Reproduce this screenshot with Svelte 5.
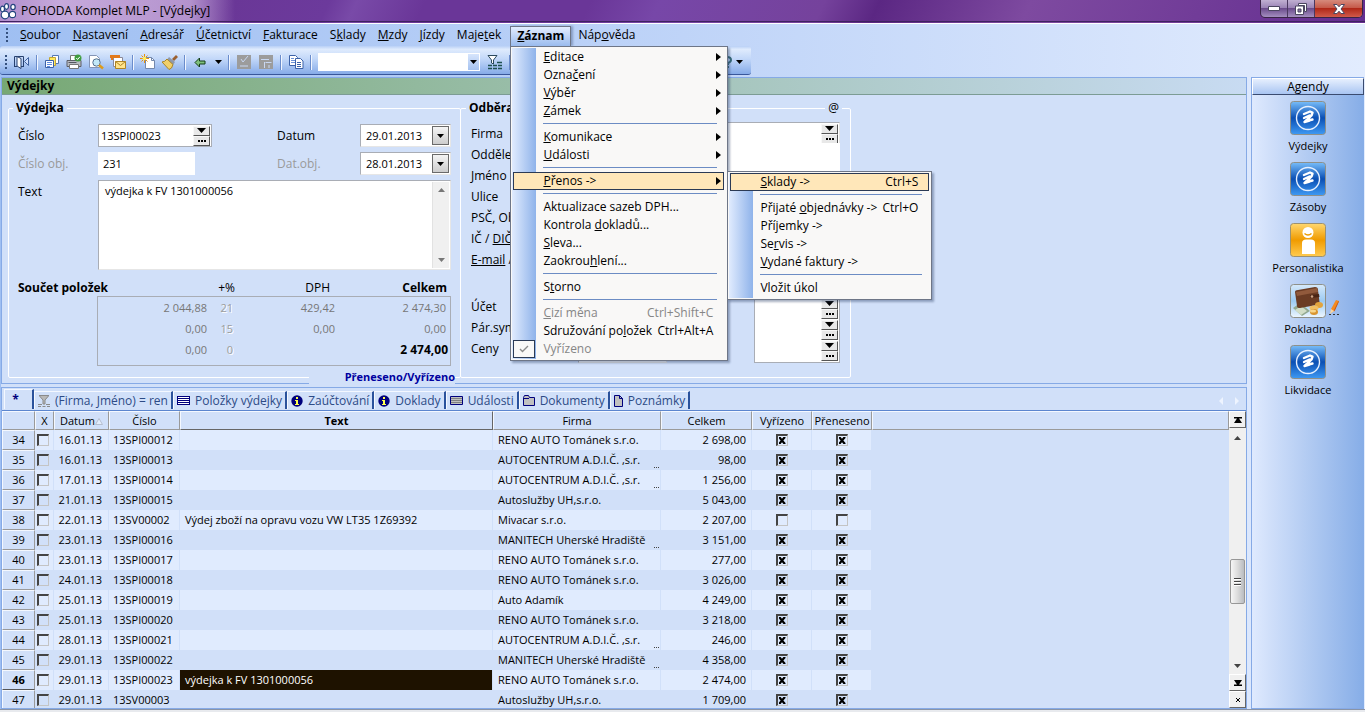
<script>
  const menus = [
    '&Soubor', '&Nastavení', '&Adresář', '&Účetnictví', '&Fakturace', 'S&klady',
    '&Mzdy', '&Jízdy', 'Maje&tek', '&Záznam', 'Náp&ověda'
  ];

  const recordMenu = [
    { text: '&Editace', sub: true },
    { text: 'Ozna&čení', sub: true },
    { text: '&Výběr', sub: true },
    { text: '&Zámek', sub: true },
    null,
    { text: '&Komunikace', sub: true },
    { text: '&Události', sub: true },
    null,
    { text: '&Přenos ->', sub: true, open: true },
    null,
    { text: 'Aktualizace sazeb DPH...' },
    { text: 'Kontrola &dokladů...' },
    { text: '&Sleva...' },
    { text: 'Zaokrou&hlení...' },
    null,
    { text: 'S&torno' },
    null,
    { text: '&Cizí měna', key: 'Ctrl+Shift+C', disabled: true },
    { text: 'Sdružování po&ložek', key: 'Ctrl+Alt+A' },
    { text: 'Vyřízeno', disabled: true, checked: true }
  ];

  const transferMenu = [
    { text: '&Sklady ->', key: 'Ctrl+S', open: true },
    null,
    { text: 'Přijaté &objednávky ->', key: 'Ctrl+O' },
    { text: 'Pří&jemky ->' },
    { text: 'Se&rvis ->' },
    { text: '&Vydané faktury ->' },
    null,
    { text: 'Vložit úkol' }
  ];

  const tabs = [
    { icon: 'funnel', text: '(Firma, Jméno) = ren' },
    { icon: 'list', text: 'Položky výdejky' },
    { icon: 'info', text: 'Zaúčtování' },
    { icon: 'info', text: 'Doklady' },
    { icon: 'listgrey', text: 'Události' },
    { icon: 'folder', text: 'Dokumenty' },
    { icon: 'page', text: 'Poznámky' }
  ];

  const agendas = [
    { icon: 'seven', text: 'Výdejky' },
    { icon: 'seven', text: 'Zásoby' },
    { icon: 'person', text: 'Personalistika' },
    { icon: 'wallet', text: 'Pokladna' },
    { icon: 'seven', text: 'Likvidace' }
  ];

  const reno = 'RENO AUTO Tománek s.r.o.';
  const autoc = 'AUTOCENTRUM A.D.I.Č. ,s.r.';
  const manitech = 'MANITECH Uherské Hradiště';

  const rows = [
    { n: 34, date: '16.01.13', no: '13SPI00012', text: '', firm: reno, sum: '2 698,00', done: true },
    { n: 35, date: '16.01.13', no: '13SPI00013', text: '', firm: autoc, more: true, sum: '98,00', done: true },
    { n: 36, date: '17.01.13', no: '13SPI00014', text: '', firm: autoc, more: true, sum: '1 256,00', done: true },
    { n: 37, date: '21.01.13', no: '13SPI00015', text: '', firm: 'Autoslužby UH,s.r.o.', sum: '5 043,00', done: true },
    { n: 38, date: '22.01.13', no: '13SV00002', text: 'Výdej zboží na opravu vozu VW LT35 1Z69392', firm: 'Mivacar s.r.o.', sum: '2 207,00', done: false },
    { n: 39, date: '23.01.13', no: '13SPI00016', text: '', firm: manitech, more: true, sum: '3 151,00', done: true },
    { n: 40, date: '23.01.13', no: '13SPI00017', text: '', firm: reno, sum: '277,00', done: true },
    { n: 41, date: '24.01.13', no: '13SPI00018', text: '', firm: reno, sum: '3 026,00', done: true },
    { n: 42, date: '25.01.13', no: '13SPI00019', text: '', firm: 'Auto Adamík', sum: '4 249,00', done: true },
    { n: 43, date: '25.01.13', no: '13SPI00020', text: '', firm: reno, sum: '3 218,00', done: true },
    { n: 44, date: '28.01.13', no: '13SPI00021', text: '', firm: autoc, more: true, sum: '246,00', done: true },
    { n: 45, date: '29.01.13', no: '13SPI00022', text: '', firm: manitech, more: true, sum: '4 358,00', done: true },
    { n: 46, date: '29.01.13', no: '13SPI00023', text: 'výdejka k FV 1301000056', firm: reno, sum: '2 474,00', done: true, current: true },
    { n: 47, date: '29.01.13', no: '13SV00003', text: '', firm: 'Autoslužby UH,s.r.o.', sum: '1 709,00', done: true }
  ];

  // '&' marks the letter that works as the keyboard accelerator
  function split(text) {
    const i = text.indexOf('&');
    if (i < 0) return [text, '', ''];
    return [text.slice(0, i), text[i + 1], text.slice(i + 2)];
  }
</script>

{#snippet caption(text)}{@const p = split(text)}{p[0]}{#if p[1]}<u>{p[1]}</u>{/if}{p[2]}{/snippet}

{#snippet menuItems(items)}
  {#each items as item}
    {#if item === null}
      <li class="separator" role="separator"></li>
    {:else}
      <li class="entry">
        <button class="item" class:open={item.open} disabled={item.disabled}>
          <span class="mark">
            {#if item.checked}
              <svg width="10" height="8" viewBox="0 0 10 8"><path d="M1 4 L3.5 6.5 L9 1" fill="none" stroke="#8c8c8c" stroke-width="1.4" /></svg>
            {/if}
          </span>
          <span class="item-text">{@render caption(item.text)}</span>
          {#if item.key}<span class="key">{item.key}</span>{/if}
          {#if item.sub}<span class="arrow"></span>{/if}
        </button>
        {#if item.sub && item.open}
          <ul class="popup submenu">{@render menuItems(transferMenu)}</ul>
        {/if}
      </li>
    {/if}
  {/each}
{/snippet}

{#snippet spinner()}
  <span class="spinner">
    <button aria-label="Rozbalit"><svg width="9" height="5" viewBox="0 0 9 5"><path d="M0 0H9L4.5 5Z" /></svg></button>
    <button aria-label="Vybrat"><svg width="8" height="2" viewBox="0 0 8 2"><path d="M0 0h2v2H0zM3 0h2v2H3zM6 0h2v2H6z" /></svg></button>
  </span>
{/snippet}

{#snippet caret()}
  <svg width="7" height="4" viewBox="0 0 7 4"><path d="M0 0H7L3.5 4Z" /></svg>
{/snippet}

{#snippet tabIcon(name)}
  {#if name === 'funnel'}
    <svg width="12" height="13" viewBox="0 0 12 13"><path d="M1 1.5h10M1.5 2l3.5 4v4h2v-4l3.500-4" fill="#b8b8b8" stroke="#8a8a8a" /><path d="M0 10.500h4M8 10.500h4M0 12.500h3M4.500 12.500h3M9 12.500h3" stroke="#8a8a8a" /></svg>
  {:else if name === 'list'}
    <svg width="13" height="9" viewBox="0 0 13 9"><path d="M0 0h13v9H0z" fill="#00007c" /><path d="M1 1.500h11M1 3.500h11M1 5.500h11M1 7.500h11" stroke="#fff" /></svg>
  {:else if name === 'listgrey'}
    <svg width="13" height="9" viewBox="0 0 13 9"><path d="M.5.5h12v8H.5z" fill="#c0c0c0" stroke="#00007c" /><path d="M1 2.500h11M1 4.500h11M1 6.500h11" stroke="#808080" /></svg>
  {:else if name === 'info'}
    <svg width="12" height="12" viewBox="0 0 12 12"><circle cx="6" cy="6" r="5.700" fill="#00007c" /><path d="M5 2h2v2H5zM4 5h3v4h1v1H4V9h1V6H4z" fill="#ffff50" /></svg>
  {:else if name === 'folder'}
    <svg width="12" height="11" viewBox="0 0 12 11"><path d="M.5 10.500v-8l1-2h4l1 2h5v8z" fill="#c0c0c0" stroke="#00007c" /><path d="M1 3.500h5" stroke="#00007c" /></svg>
  {:else}
    <svg width="9" height="12" viewBox="0 0 9 12"><path d="M.5.500h5l3 3v8H.5z" fill="#c0c0c0" stroke="#00007c" /><path d="M5.500.500v3h3" fill="none" stroke="#00007c" /></svg>
  {/if}
{/snippet}

{#snippet agendaIcon(name)}
  <svg width="36" height="34" viewBox="0 0 36 34">
    {#if name === 'seven'}
      <rect x=".5" y=".5" width="35" height="33" rx="3" fill="url(#blue)" stroke="#8f9089" />
      <circle cx="18" cy="17" r="11.500" fill="none" stroke="#e6f0ff" stroke-width="1.400" />
      <path d="M14 13L20 10.500l2.500 1-1 3-2 2-4.500 4 7.500-2M14 17l5.500-2.500M14.500 21l5-1.500" fill="none" stroke="#fff" stroke-width="2.400" stroke-linejoin="round" stroke-linecap="round" />
    {:else if name === 'person'}
      <rect x=".5" y=".5" width="35" height="33" rx="3" fill="url(#gold)" stroke="#9c9170" />
      <circle cx="18" cy="9.500" r="5.500" fill="#fff" />
      <path d="M14.500 10.500q3.500 3 7 0" fill="none" stroke="#eb9c00" stroke-width="1.500" />
      <path d="M12 31V20q0-3.500 4-3.500h5q4 0 4 3.500v11z" fill="#fff" />
    {:else}
      <rect x=".5" y=".5" width="35" height="33" rx="3" fill="url(#sky)" stroke="#8f9089" />
      <path d="M3 24l7-5 10 8-8 5z" fill="#91a890" />
      <path d="M5 26l6-4 6 5-6 4z" fill="#d2dec8" />
      <path d="M5 8q0-2 3-2l17-3q3 0 3 3l1.500 12q0 2-3 3L10 24q-3 0-3-2z" fill="#6b3c24" />
      <path d="M6 8l21-4 1 4-21 4z" fill="#915a3c" />
      <path d="M20 11l9-1 .5 3-9 1z" fill="#4a2414" />
      <circle cx="22" cy="12.500" r="1.300" fill="#d1a585" />
      <ellipse cx="29" cy="21" rx="4" ry="3" fill="#e3a43d" />
      <ellipse cx="24" cy="24" rx="4.500" ry="2.500" fill="#f2bf62" />
      <ellipse cx="24" cy="28" rx="4" ry="3" fill="#d99530" />
      <ellipse cx="23" cy="27" rx="3" ry="1.500" fill="#f8d68a" />
    {/if}
  </svg>
{/snippet}

<svg class="defs" width="0" height="0" aria-hidden="true">
  <defs>
    <linearGradient id="blue" x1="0" y1="0" x2="0" y2="1">
      <stop offset="0" stop-color="#78bdf9" /><stop offset=".5" stop-color="#0a4fb4" /><stop offset="1" stop-color="#3f9af3" />
    </linearGradient>
    <linearGradient id="gold" x1="0" y1="0" x2="0" y2="1">
      <stop offset="0" stop-color="#ffd770" /><stop offset=".5" stop-color="#f09b00" /><stop offset="1" stop-color="#ffcb50" />
    </linearGradient>
    <linearGradient id="sky" x1="0" y1="0" x2="0" y2="1">
      <stop offset="0" stop-color="#d6e9fa" /><stop offset=".5" stop-color="#9ccaf2" /><stop offset="1" stop-color="#eef7ff" />
    </linearGradient>
  </defs>
</svg>

<div class="window">
  <header class="titlebar">
    <svg class="logo" width="16" height="17" viewBox="0 0 16 17">
      <g fill="#fff" stroke="#24447e" stroke-width="1.200">
        <ellipse cx="2.500" cy="6" rx="2" ry="2.800" /><ellipse cx="6.500" cy="3.500" rx="2" ry="2.800" /><ellipse cx="13" cy="4" rx="2.200" ry="2.600" />
        <circle cx="5" cy="12" r="3.800" /><circle cx="12.500" cy="11.500" r="3.200" />
      </g>
    </svg>
    <h1>POHODA Komplet MLP - [Výdejky]</h1>
    <div class="window-buttons">
      <button aria-label="Minimalizovat"><svg width="12" height="5" viewBox="0 0 12 5"><path d="M.5.500h11v4H.5z" fill="#fff" stroke="#4b4660" /></svg></button>
      <button aria-label="Obnovit"><svg width="12" height="12" viewBox="0 0 12 12"><path d="M3.500.500h8v8h-2v-6h-6z" fill="#fff" stroke="#4b4660" /><path d="M.5 3h8v8.500H.500z" fill="#fff" stroke="#4b4660" /><path d="M3 6h3v3H3z" fill="#8b79a6" stroke="#4b4660" /></svg></button>
      <button class="close" aria-label="Zavřít"><svg width="12" height="10" viewBox="0 0 12 10"><path d="M.5.500h3.500l2 2.300 2-2.300h3.500L8 5l3.500 4.500H8L6 7.200 4 9.500H.5L4 5z" fill="#fff" stroke="#4b4660" /></svg></button>
    </div>
  </header>

  <nav class="menubar">
    <span class="grip"></span>
    {#each menus as menu}
      {#if menu === '&Záznam'}
        <div class="menu-root">
          <button class="menu active">{@render caption(menu)}</button>
          <ul class="popup">{@render menuItems(recordMenu)}</ul>
        </div>
      {:else}
        <button class="menu">{@render caption(menu)}</button>
      {/if}
    {/each}
  </nav>

  <div class="toolbar">
    <span class="grip"></span>
    <button class="tool" aria-label="Konec">
      <svg width="16" height="16" viewBox="0 0 16 16"><path d="M.5 12V2.500h9V12" fill="none" stroke="#27406e" /><path d="M3 2.500l4 2v10l-4-2.500z" fill="#fff" stroke="#27406e" /><path d="M0 12.500h3M7 12.500h3" stroke="#27406e" /><path d="M10.500 7.500l4-4v8z" fill="#cfe0ff" stroke="#4163a0" /></svg>
    </button>
    <i class="sep"></i>
    <button class="tool" aria-label="Tiskové sestavy">
      <svg width="16" height="16" viewBox="0 0 16 16"><path d="M8.500 1.500h6v8h-6z" fill="#fff" stroke="#5376b5" /><path d="M5.500 3.500h6v8h-6z" fill="#ffe95c" stroke="#c3a634" /><path d="M1.500 6.500h8v7h-8z" fill="#fff" stroke="#3c62a8" /><path d="M3 8.500h5M3 10.500h5M3 12.500h3" stroke="#5f8be0" /></svg>
    </button>
    <button class="tool" aria-label="Tisk">
      <svg width="16" height="16" viewBox="0 0 16 16"><path d="M4.500 1.500h7v5h-7z" fill="#fff" stroke="#777" /><path d="M1 6.500h14v6H1z" fill="#b9bcc4" stroke="#5c5e66" /><path d="M3.500 10.500h9v4h-9z" fill="#fff" stroke="#777" /><path d="M2.500 8.500h8" stroke="#55575f" /><circle cx="12" cy="4" r="3.500" fill="#3f9c3f" /><path d="M10.300 4l1.300 1.500 2.300-2.700" fill="none" stroke="#fff" /></svg>
    </button>
    <button class="tool" aria-label="Náhled">
      <svg width="16" height="16" viewBox="0 0 16 16"><path d="M1.500 1.500h7l3 3v9h-10z" fill="#fff" stroke="#8494b5" /><circle cx="8.500" cy="8.500" r="3.700" fill="#c2e8f7" stroke="#55708f" /><path d="M11 11l4 3.500" stroke="#dc9b1c" stroke-width="2.500" /></svg>
    </button>
    <button class="tool" aria-label="Odeslat">
      <svg width="16" height="16" viewBox="0 0 16 16"><path d="M3.500 3.500h9v9h-9z" fill="#fff" stroke="#889" /><path d="M0 1h10v3H3v2H1V4H0z" fill="#e27a1c" /><path d="M5.500 7.500h10v7h-10z" fill="#ffe48a" stroke="#b08424" /><path d="M5.500 7.500l5 4 5-4" fill="none" stroke="#b08424" /></svg>
    </button>
    <i class="sep"></i>
    <button class="tool" aria-label="Nový">
      <svg width="16" height="16" viewBox="0 0 16 16"><path d="M5.500 3.500h6l3 3v8h-9z" fill="#fff" stroke="#7388ad" /><path d="M11.500 3.500v3h3" fill="none" stroke="#7388ad" /><path d="M4.500 0v9M0 4.500h9M1.500 1.500l6 6M7.500 1.500l-6 6" stroke="#e9930c" /><circle cx="4.500" cy="4.500" r="1.800" fill="#fff060" /></svg>
    </button>
    <button class="tool" aria-label="Vyčistit">
      <svg width="16" height="16" viewBox="0 0 16 16"><path d="M10 5l4-4 2 2-4 4z" fill="#9b6030" /><path d="M7 3l6 5-2 3-6-5z" fill="#8f99ab" /><path d="M5 5l6 5.500q-1 4.500-4 5L0 8q3 0 5-3z" fill="#f0cf6a" stroke="#a98427" /></svg>
    </button>
    <i class="sep"></i>
    <button class="tool" aria-label="Zpět">
      <svg width="12" height="11" viewBox="0 0 12 11"><path d="M1 5.500L5.500 1v3H11v3H5.500v3z" fill="#7fc07c" stroke="#123c18" /></svg>
    </button>
    <button class="tool narrow" aria-label="Historie">{@render caret()}</button>
    <i class="sep"></i>
    <button class="tool" aria-label="Uložit" disabled>
      <svg width="14" height="14" viewBox="0 0 14 14"><path d="M0 0h14v14H0z" fill="#9c9c9c" /><path d="M4 4l2 3 5-6M3 11h8" fill="none" stroke="#c9d8f2" /></svg>
    </button>
    <button class="tool" aria-label="Uložit kopii" disabled>
      <svg width="14" height="14" viewBox="0 0 14 14"><path d="M0 0h14v14H0z" fill="#9c9c9c" /><path d="M2 4.500h8M6.500 7.500h6M5.500 7v6M10 10v3" fill="none" stroke="#c9d8f2" /></svg>
    </button>
    <i class="sep"></i>
    <button class="tool" aria-label="Kopírovat">
      <svg width="16" height="16" viewBox="0 0 16 16"><path d="M1.500 1.500h6l2 2v8h-8z" fill="#fff" stroke="#3c62a8" /><path d="M3 4.500h3M3 6.500h4M3 8.500h4" stroke="#6c92d8" /><path d="M7.500 4.500h5l2.500 2.500v7.500h-7.500z" fill="#fff" stroke="#3c62a8" /><path d="M9 8.500h4M9 10.500h4M9 12.500h4" stroke="#3c62a8" /></svg>
    </button>
    <i class="sep"></i>
    <div class="search">
      <input type="text" aria-label="Hledat" />
      <button aria-label="Poslední hledání">{@render caret()}</button>
    </div>
    <button class="tool" aria-label="Filtr">
      <svg width="16" height="15" viewBox="0 0 16 15"><path d="M1 .500h9L6.500 5v4L4.500 8V5z" fill="#fff" stroke="#2c4a5e" /><path d="M1 10.500h4M6 10.500h4M11 10.500h4M1 13.500h4M6 13.500h4M11 13.500h4M10 7.500h5" stroke="#1e5050" stroke-width="1.500" /></svg>
    </button>
    <i class="sep"></i>
    <button class="tool help" aria-label="Nápověda">
      <svg width="10" height="13" viewBox="0 0 10 13"><path d="M1 4q0-3 4-3t4 3q0 2-3 3v2M5 11h2" fill="none" stroke="#356a78" stroke-width="2" /></svg>
    </button>
    <button class="tool narrow" aria-label="Další nápověda">{@render caret()}</button>
  </div>

  <main>
    <div class="work">
      <section class="panel form">
        <h2>Výdejky</h2>
        <div class="fieldsets">
          <fieldset class="document">
            <legend>Výdejka</legend>
            <div class="fields">
              <label for="no">Číslo</label>
              <div class="field sunken number"><input id="no" value="13SPI00023" />{@render spinner()}</div>
              <label for="date">Datum</label>
              <div class="field sunken"><input id="date" value="29.01.2013" /><button class="drop" aria-label="Kalendář">{@render caret()}</button></div>
              <label class="dim" for="order">Číslo obj.</label>
              <div class="field order"><input id="order" value="231" /></div>
              <label class="dim" for="orderdate">Dat.obj.</label>
              <div class="field sunken"><input id="orderdate" value="28.01.2013" /><button class="drop" aria-label="Kalendář">{@render caret()}</button></div>
            </div>
            <div class="note">
              <label for="note">Text</label>
              <div class="memo sunken">
                <textarea id="note">výdejka k FV 1301000056</textarea>
                <span class="memo-scroll">
                  <svg width="7" height="4" viewBox="0 0 7 4"><path d="M0 4H7L3.500 0Z" fill="#777" /></svg>
                  <svg width="7" height="4" viewBox="0 0 7 4"><path d="M0 0H7L3.500 4Z" fill="#777" /></svg>
                </span>
              </div>
            </div>
            <div class="totals-head">
              <b>Součet položek</b><span>+%</span><span>DPH</span><b>Celkem</b>
            </div>
            <div class="totals">
              <span>2 044,88</span><span class="rate">21</span><span>429,42</span><span>2 474,30</span>
              <span>0,00</span><span class="rate">15</span><span>0,00</span><span>0,00</span>
              <span>0,00</span><span class="rate">0</span><span></span><b>2 474,00</b>
            </div>
            <strong class="status">Přeneseno/Vyřízeno</strong>
          </fieldset>

          <fieldset class="customer">
            <legend>Odběratel</legend>
            <a class="at" href="#mail">@</a>
            <div class="contact">
              <label for="firm">Firma</label>
              <div class="field sunken firm"><input id="firm" value={reno} />{@render spinner()}</div>
              <label for="dept">Oddělení</label>
              <div class="field"><input id="dept" /></div>
              <label for="name">Jméno</label>
              <div class="field"><input id="name" /></div>
              <label for="street">Ulice</label>
              <div class="field"><input id="street" /></div>
              <label for="city">PSČ, Obec</label>
              <div class="field"><input id="city" /></div>
              <label for="ic">IČ / <a href="#dic">DIČ</a></label>
              <div class="field"><input id="ic" /></div>
              <label for="mail"><a href="#email">E-mail</a> / Web</label>
              <div class="field"><input id="mail" /></div>
            </div>
            <div class="accounting">
              <div class="labels">
                <label for="account">Účet</label>
                <label for="symbol">Pár.symbol</label>
                <label for="price">Ceny</label>
              </div>
              <div class="field sunken price"><input id="price" /><button class="drop" aria-label="Ceny">{@render caret()}</button></div>
              <div class="codes sunken">
                <div class="field"><input id="account" />{@render spinner()}</div>
                <div class="field"><input id="symbol" />{@render spinner()}</div>
                <div class="field"><input aria-label="Činnost" />{@render spinner()}</div>
              </div>
            </div>
          </fieldset>
        </div>
      </section>

      <section class="panel list">
        <div class="tabs">
          <button class="tab star">*</button>
          {#each tabs as tab}
            <button class="tab">{@render tabIcon(tab.icon)}{tab.text}</button>
          {/each}
          <span class="tab-arrows">
            <svg width="20" height="8" viewBox="0 0 20 8"><path d="M4 0v8L0 4zM16 0v8l4-4z" fill="#eef4ff" /></svg>
          </span>
        </div>
        <div class="grid">
          <div class="grid-view">
            <table>
              <colgroup>
                <col class="c-n" /><col class="c-x" /><col class="c-date" /><col class="c-no" /><col class="c-text" />
                <col class="c-firm" /><col class="c-sum" /><col class="c-done" /><col class="c-moved" /><col />
              </colgroup>
              <thead>
                <tr>
                  <th></th><th>X</th>
                  <th>Datum<svg width="8" height="7" viewBox="0 0 8 7"><path d="M.5 6.500L4 .500l3.500 6z" fill="#e4edfc" stroke="#b6bfd0" /></svg></th>
                  <th>Číslo</th><th class="sorted">Text</th><th>Firma</th><th>Celkem</th><th>Vyřízeno</th><th>Přeneseno</th><th></th>
                </tr>
              </thead>
              <tbody>
                {#each rows as row}
                  <tr class:current={row.current}>
                    <th scope="row">{row.n}</th>
                    <td class="check left"><input type="checkbox" aria-label="Označit {row.n}" /></td>
                    <td class="date">{row.date}</td>
                    <td>{row.no}</td>
                    <td class="text">{row.text}</td>
                    <td class:more={row.more}>{row.firm}</td>
                    <td class="sum">{row.sum}</td>
                    <td class="check"><input type="checkbox" aria-label="Vyřízeno {row.n}" checked={row.done} /></td>
                    <td class="check"><input type="checkbox" aria-label="Přeneseno {row.n}" checked={row.done} /></td>
                    <td class="rest"></td>
                  </tr>
                {/each}
              </tbody>
            </table>
          </div>
          <div class="scrollbar">
            <button aria-label="Začátek"><svg width="8" height="6" viewBox="0 0 8 6"><path d="M0 0h8v1.500H5L8 6H0l3-4.500H0z" /></svg></button>
            <div class="track">
              <svg width="7" height="4" viewBox="0 0 7 4"><path d="M0 4H7L3.500 0Z" fill="#444" /></svg>
              <span class="thumb"></span>
              <svg width="7" height="4" viewBox="0 0 7 4"><path d="M0 0H7L3.500 4Z" fill="#444" /></svg>
            </div>
            <button aria-label="Konec"><svg width="8" height="6" viewBox="0 0 8 6"><path d="M0 6h8V4.500H5L8 0H0l3 4.500H0z" /></svg></button>
            <button aria-label="Zrušit"><svg width="4" height="4" viewBox="0 0 4 4"><path d="M0 0l4 4M4 0L0 4" stroke="#000" /></svg></button>
          </div>
        </div>
      </section>
    </div>

    <aside class="agendas">
      <h3>Agendy</h3>
      {#each agendas as agenda}
        <button class="agenda">
          <span class="picture">
            {@render agendaIcon(agenda.icon)}
            {#if agenda.icon === 'wallet'}
              <svg class="pencil" width="10" height="17" viewBox="0 0 10 17"><path d="M2 10L7 1l3 1-5 10-3 2z" fill="#f58a1e" /><path d="M5 11L9.500 2l.5.5-4.500 10z" fill="#c9540c" /><path d="M2 10l3 2-4 3z" fill="#f6d7a6" /><path d="M0 15.500h2M4 15.500h2M8 15.500h2" stroke="#333" /></svg>
            {/if}
          </span>
          {agenda.text}
        </button>
      {/each}
    </aside>
  </main>
  <footer></footer>
</div>

<style>
  :global(body) {
    margin: 0;
    overflow: hidden;
  }

  .window {
    --face: #d1e0f9;
    --line: #86aae6;
    display: flex;
    flex-direction: column;
    height: 100vh;
    background: linear-gradient(to right, #9fbff2, #bfd4f8 50%, #e2ecfe);
    color: #000;
    font: 12px/16px 'Open Sans', 'Noto Sans', sans-serif;
  }

  .window * {
    box-sizing: border-box;
  }

  .defs {
    position: absolute;
  }

  button,
  input,
  textarea {
    margin: 0;
    padding: 0;
    border: 0;
    border-radius: 0;
    background: none;
    color: inherit;
    font: inherit;
  }

  input,
  textarea {
    font-size: 11px;
  }

  button {
    display: flex;
    align-items: center;
    justify-content: center;
  }

  svg {
    flex: none;
  }

  a {
    color: inherit;
  }

  /* title bar */
  .titlebar {
    display: flex;
    flex: none;
    align-items: center;
    height: 24px;
    padding-bottom: 1px;
    border-bottom: 1px solid #fff;
    background:
      linear-gradient(#3f2260, #3f2260) 0 21px / 100% 1px no-repeat,
      linear-gradient(to right, rgba(235, 215, 245, 0.4), rgba(235, 215, 245, 0.65) 60px, rgba(235, 215, 245, 0.55) 190px, rgba(235, 215, 245, 0) 235px),
      linear-gradient(115deg, #8a5fb4 0, #6a3797 17%, #6c3a9c 24%, #794aa8 26%, #6a3698 31%, #6a3698 43%, #7747a8 48%, #75429c 60%, #5b2783 64%, #7e4aa0 75%, #642e90 100%);
  }

  h1 {
    flex: 1;
    margin: 0 0 0 5px;
    font-size: 12px;
    font-weight: 400;
  }

  .window-buttons {
    display: flex;
    align-self: flex-start;
    height: 18px;
    margin-right: 2px;
    border: 1px solid #392446;
    border-top: 0;
    border-radius: 0 0 5px 5px;
    background: linear-gradient(#c0b0d2, #9b84b6 45%, #6b4c8c 50%, #a48fbf);
    overflow: hidden;
  }

  .window-buttons button {
    width: 27px;
    border-right: 1px solid #4a3860;
  }

  .window-buttons .close {
    width: 47px;
    border-right: 0;
    background: linear-gradient(#d68a7c, #c65a4a 45%, #b02818 50%, #d05a4a);
  }

  /* menu bar */
  .menubar {
    display: flex;
    flex: none;
    align-items: flex-end;
    height: 22px;
    padding-left: 6px;
  }

  .grip {
    align-self: center;
    flex: none;
    width: 2px;
    height: 14px;
    margin-right: 6px;
    background: repeating-linear-gradient(#34507e 0 2px, transparent 2px 4px);
  }

  .menu {
    height: 20px;
    padding: 0 6px 2px;
    white-space: pre;
  }

  .menu-root {
    position: relative;
    margin: 0 1px 0 3px;
  }

  .menu.active {
    border: 1px solid #6e7687;
    border-bottom: 0;
    background: linear-gradient(#e3edfe, #9abbee);
    box-shadow: 2px 0 2px rgba(60, 80, 120, 0.4);
    font-weight: 700;
  }

  .popup {
    position: absolute;
    z-index: 10;
    top: 100%;
    left: 0;
    margin: 0;
    padding: 1px 3px 2px 2px;
    border: 1px solid #6e7687;
    background:
      linear-gradient(to right, #e0ebfe, #8fb3ea) 1px 1px / 24px calc(100% - 2px) no-repeat,
      #f9f8f7;
    box-shadow: 2px 2px 2px rgba(40, 60, 100, 0.4);
    list-style: none;
    min-width: 218px;
  }

  .submenu {
    top: -1px;
    left: 100%;
    min-width: 205px;
    margin-left: 3px;
    padding-right: 2px;
  }

  .entry {
    position: relative;
  }

  .item {
    width: 100%;
    height: 18px;
    padding-right: 10px;
    border: 1px solid transparent;
    justify-content: flex-start;
    text-align: left;
    white-space: pre;
  }

  .item.open {
    border-color: #2b3a55;
    background: #ffe7b9;
  }

  .item:disabled {
    color: #868686;
  }

  .mark {
    display: flex;
    flex: none;
    align-items: center;
    justify-content: center;
    width: 22px;
    height: 18px;
    margin: 0 8px 0 -1px;
  }

  .mark:has(svg) {
    border: 1px solid #2b3a55;
    background: #f9f8f7;
  }

  .item-text {
    flex: 1;
  }

  .key {
    margin-left: 5px;
  }

  .arrow {
    margin-right: -8px;
    border: 4px solid transparent;
    border-right: 0;
    border-left: 5px solid #000;
  }

  .separator {
    height: 8px;
    margin: 0 7px 0 30px;
    background: linear-gradient(#6c8cc4, #6c8cc4) 0 3px / 100% 1px no-repeat;
  }

  /* toolbar */
  .toolbar {
    display: flex;
    flex: none;
    align-items: center;
    width: 55%;
    height: 29px;
    margin-bottom: 2px;
    padding: 4px 0 0 5px;
    border-bottom: 1px solid #39579a;
    border-radius: 3px;
    background: linear-gradient(#b9d0f6, #dfebfd 12%, #c3d8f9 45%, #86abe8);
  }

  .toolbar .grip {
    margin-right: 4px;
  }

  .tool {
    flex: none;
    width: 22px;
    height: 22px;
  }

  .tool.narrow {
    width: 14px;
  }

  .help {
    margin-left: auto;
    margin-right: -5px;
  }

  .help + .narrow {
    margin-right: 4px;
  }

  .sep {
    flex: none;
    width: 2px;
    height: 15px;
    margin: 0 3px;
    border-left: 1px solid #6a8ccb;
    border-right: 1px solid #f1f6ff;
  }

  .search {
    display: flex;
    width: 162px;
    height: 18px;
    margin: 0 4px 0 3px;
    border: 1px solid #fff;
    background: #fff;
  }

  .search input {
    flex: 1;
    min-width: 0;
  }

  .search button {
    width: 11px;
    background: linear-gradient(#d7e5fc, #a5c2f0);
  }

  /* work area */
  main {
    display: flex;
    flex: 1;
    gap: 4px;
    min-height: 0;
    padding: 0 1px;
  }

  .work {
    display: flex;
    flex: 1;
    flex-direction: column;
    gap: 3px;
    min-width: 0;
    background: var(--face);
  }

  .panel {
    border: 1px solid var(--line);
    background: var(--face);
  }

  h2 {
    height: 17px;
    margin: 0;
    padding-left: 5px;
    border-bottom: 1px solid #7c9c94;
    background: linear-gradient(to right, #77a874, #c8dbf2);
    font-size: 12px;
    line-height: 16px;
  }

  .fieldsets {
    display: flex;
    padding: 5px 6px;
  }

  fieldset {
    position: relative;
    min-width: 0;
    margin: 0;
    padding: 0;
    border: 1px solid #fff;
    border-radius: 2px;
  }

  legend {
    margin-left: -5px;
    padding: 0 3px;
    font-weight: 700;
  }

  .document {
    width: 453px;
    padding: 8px 9px 11px;
  }

  .customer {
    width: 391px;
    margin-left: -1px;
    padding: 7px 10px 11px;
  }

  .at {
    position: absolute;
    top: -16px;
    right: 8px;
    padding: 0 3px;
    background: var(--face);
    text-decoration: none;
  }

  .fields {
    display: grid;
    grid-template-columns: 80px 179px 83px 91px;
    row-gap: 5px;
    align-items: center;
  }

  .dim {
    color: #9a9a9a;
  }

  .field {
    display: flex;
    align-items: center;
    height: 23px;
    padding: 1px;
    background: #fff;
  }

  .field input {
    flex: 1;
    min-width: 0;
    padding-left: 4px;
  }

  .sunken {
    border: 1px solid #a9adb5;
    border-right-color: #e6e6e6;
    border-bottom-color: #e6e6e6;
  }

  .number {
    width: 114px;
    border-color: #a9adb5;
  }

  .number input {
    padding-left: 1px;
  }

  .order {
    width: 97px;
  }

  .spinner {
    display: flex;
    flex: none;
    flex-direction: column;
    width: 17px;
  }

  .spinner button {
    height: 10px;
    border: 1px solid #f8f8f8;
    border-right-color: #555;
    border-bottom-color: #555;
    background: #e8e8e8;
  }

  .drop {
    width: 17px;
    height: 19px;
    border: 1px solid #6a6a6a;
    background: linear-gradient(#f4f4f4, #cdcdcd);
  }

  .note {
    display: flex;
    margin-top: 5px;
  }

  .note label {
    width: 80px;
    padding-top: 4px;
  }

  .memo {
    display: flex;
    flex: 1;
    height: 90px;
    padding: 1px;
    background: #fff;
  }

  .memo textarea {
    flex: 1;
    padding: 1px 5px;
    resize: none;
  }

  .memo-scroll {
    display: flex;
    flex-direction: column;
    align-items: center;
    justify-content: space-between;
    width: 17px;
    padding: 6px 0;
    border-left: 1px solid #e2e2e2;
    background: #f0f0f0;
  }

  .totals-head,
  .totals {
    display: grid;
    text-align: right;
  }

  .totals-head {
    grid-template-columns: 1fr 70px 95px 117px;
    margin: 10px 4px 0 0;
  }

  .totals-head :first-child {
    text-align: left;
  }

  .totals {
    grid-template-columns: 109px 26px 102px 1fr;
    grid-auto-rows: 21px;
    align-items: center;
    margin-left: 79px;
    padding: 0 2px 5px 0;
    border: 1px solid #a9adb5;
    color: #777;
    font-size: 11px;
  }

  .totals span:nth-child(4n) {
    padding-right: 2px;
  }

  .rate {
    color: #9c9c9c;
    text-shadow: 1px 1px #fff;
  }

  .totals b {
    color: #000;
    font-size: 12px;
  }

  .status {
    position: absolute;
    right: 5px;
    bottom: -8px;
    padding-left: 36px;
    background: var(--face);
    color: #0000a0;
    font-size: 11px;
  }

  .contact {
    display: grid;
    grid-template-columns: 95px 1fr;
    grid-auto-rows: 21px;
    align-items: center;
    white-space: nowrap;
  }

  .firm input {
    padding-left: 6px;
    font-size: 12px;
  }

  .accounting {
    display: flex;
    margin-top: 26px;
  }

  .labels {
    display: grid;
    grid-auto-rows: 21px;
    align-items: center;
    width: 107px;
  }

  .price {
    align-self: flex-end;
    width: 89px;
  }

  .codes {
    width: 86px;
    margin-left: auto;
    padding: 1px;
    border-color: #a9adb5;
    background: #fff;
  }

  .codes .field {
    height: 21px;
    padding: 0;
  }

  /* list */
  .list {
    display: flex;
    flex: 1;
    flex-direction: column;
    min-height: 0;
  }

  .tabs {
    display: flex;
    flex: none;
    align-items: flex-end;
    height: 23px;
    padding: 0 0 1px 2px;
    border-bottom: 1px solid #5c86cf;
  }

  .tab {
    gap: 5px;
    height: 18px;
    padding: 0 3px;
    border-top: 1px solid #f4f8ff;
    border-left: 1px solid #f4f8ff;
    border-right: 2px solid #2a529c;
    color: #2d4b86;
    white-space: nowrap;
  }

  .star {
    width: 30px;
    height: 20px;
    padding: 0 12px 0 6px;
    color: #00007c;
    font-weight: 700;
  }

  .tab-arrows {
    margin: 0 7px 0 auto;
  }

  .grid {
    display: flex;
    flex: 1;
    min-height: 0;
  }

  .grid-view {
    flex: 1;
    min-width: 0;
    overflow: hidden;
  }

  table {
    width: 100%;
    border-collapse: separate;
    border-spacing: 0;
    font-size: 11px;
    table-layout: fixed;
  }

  .c-n { width: 33px; }
  .c-x { width: 19px; }
  .c-date { width: 55px; }
  .c-no { width: 71px; }
  .c-text { width: 313px; }
  .c-firm { width: 168px; }
  .c-sum { width: 91px; }
  .c-done { width: 60px; }
  .c-moved { width: 60px; }

  th {
    height: 20px;
    padding: 0;
    border: 1px solid #f4f8ff;
    border-right-color: #9a9a9a;
    border-bottom-color: #9a9a9a;
    background: var(--face);
    font-weight: 400;
    white-space: nowrap;
  }

  thead th {
    height: 19px;
  }

  th.sorted {
    border-right-color: #666;
    border-bottom-color: #666;
    font-weight: 700;
  }

  td {
    height: 20px;
    padding: 0 5px;
    border-right: 1px solid var(--face);
    white-space: nowrap;
  }

  tbody tr:nth-child(odd) td {
    background: #e0ebfe;
  }

  tbody tr td.rest {
    background: var(--face);
  }

  tbody tr.current th {
    border-bottom-color: #555;
    font-weight: 700;
  }

  tbody tr.current td.text {
    background: #1e1200;
    color: #fff;
  }

  td:nth-child(4) {
    padding: 0 0 0 4px;
  }

  td.date {
    padding-right: 6px;
    padding-left: 0;
    text-align: right;
  }

  td.sum {
    text-align: right;
  }

  td.more {
    background-image: repeating-linear-gradient(to right, #444 0 1px, transparent 1px 2px) !important;
    background-position: right 1px bottom 2px !important;
    background-repeat: no-repeat !important;
    background-size: 5px 1px !important;
  }

  td.check {
    padding: 0;
  }

  td.left {
    padding-left: 2px;
  }

  td input {
    display: block;
    width: 12px;
    height: 12px;
    margin: 0 auto;
    border: 1px solid #c4c4c4;
    border-top: 2px solid #444;
    border-left: 2px solid #444;
    appearance: none;
  }

  td.left input {
    margin: 0;
  }

  td input:checked::before {
    content: '';
    display: block;
    width: 7px;
    height: 7px;
    margin: 1px;
    background: #000;
    clip-path: polygon(0 0, 30% 0, 50% 25%, 70% 0, 100% 0, 100% 15%, 70% 50%, 100% 85%, 100% 100%, 70% 100%, 50% 75%, 30% 100%, 0 100%, 0 85%, 30% 50%, 0 15%);
  }

  .scrollbar {
    display: flex;
    flex: none;
    flex-direction: column;
    width: 17px;
  }

  .scrollbar button {
    height: 17px;
    border: 1px solid #fff;
    border-right-color: #666;
    border-bottom-color: #666;
    background: #f0f0f0;
  }

  .track {
    display: flex;
    flex: 1;
    flex-direction: column;
    align-items: center;
    padding: 8px 0 6px;
    background: #f0f0f0;
  }

  .thumb {
    width: 15px;
    height: 45px;
    margin: auto 0 60px;
    border: 1px solid #979797;
    border-radius: 2px;
    background:
      repeating-linear-gradient(#444 0 1px, #fff 1px 2px, transparent 2px 3px) center / 7px 8px no-repeat,
      linear-gradient(to right, #f6f6f6, #dcdcdc 50%, #b9bcc0);
  }

  /* agendas */
  .agendas {
    display: flex;
    flex-direction: column;
    align-items: stretch;
    width: 113px;
    border: 1px solid var(--line);
    border-right: 0;
    background: linear-gradient(to right, #dfeafe, #d1e0fa 15%, #86ade7);
  }

  h3 {
    margin: 0 0 6px;
    border: 1px solid #fff;
    border-right-color: #3a4b70;
    border-bottom-color: #3a4b70;
    background: linear-gradient(#e6effe, #a9c5f2);
    font-size: 12px;
    font-weight: 400;
    line-height: 15px;
    text-align: center;
  }

  .agenda {
    flex-direction: column;
    gap: 3px;
    height: 53px;
    margin-bottom: 8px;
    font-size: 11px;
  }

  .picture {
    position: relative;
    display: flex;
  }

  .pencil {
    position: absolute;
    top: 15px;
    left: 39px;
  }

  footer {
    flex: none;
    height: 3px;
    border-top: 1px solid #8a94a6;
    background: #e8eaee;
  }
</style>
